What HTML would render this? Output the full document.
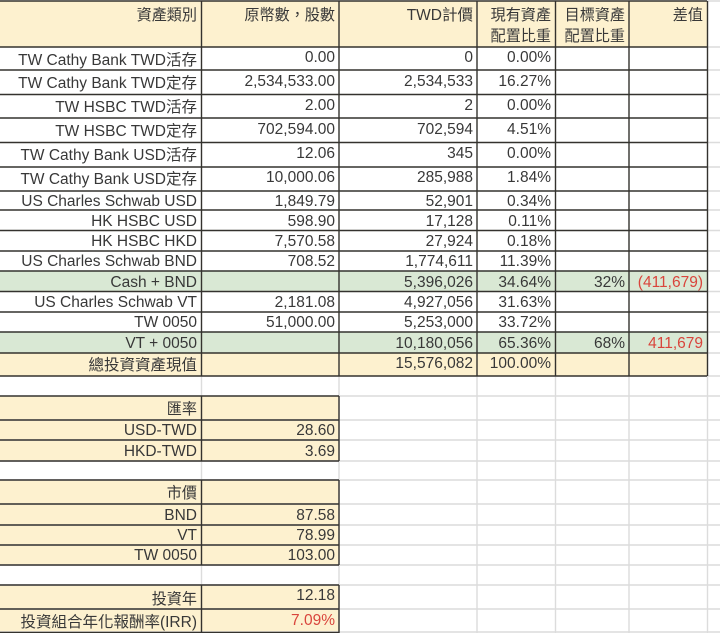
<!DOCTYPE html>
<html><head><meta charset="utf-8">
<style>
html,body{margin:0;padding:0;background:#fff;width:720px;height:633px;overflow:hidden}
svg{display:block;filter:blur(.35px)}
text{font-family:"Liberation Sans","Noto Sans CJK TC",sans-serif;font-size:15.5px;fill:#383838;text-anchor:end}
.c{font-size:15.1px}
.r{fill:#d9453c}
</style></head><body>
<svg width="720" height="633" viewBox="0 0 720 633" xmlns="http://www.w3.org/2000/svg">
<!-- fills -->
<g fill="#fdf1cf">
<rect x="0" y="1" width="707" height="46"/>
<rect x="0" y="353" width="707" height="23"/>
<rect x="0" y="396" width="339" height="65"/>
<rect x="0" y="480" width="339" height="85"/>
<rect x="0" y="585" width="339" height="48"/>
</g>
<g fill="#d9e8d4">
<rect x="0" y="271" width="707" height="21"/>
<rect x="0" y="332" width="707" height="21"/>
</g>
<!-- faint grid -->
<g stroke="#dcdcdc" stroke-width="1.4" fill="none">
<path d="M201.5 376V396M201.5 461V480M201.5 565V585"/>
<path d="M339 376V633M477 376V633M555.5 376V633M629 376V633M707.5 376V633"/>
<path d="M0 420H720M0 440H720M0 461H720M0 480H720M0 504H720M0 525H720M0 545H720M0 565H720M0 585H720M0 609H720M0 632H720"/>
<path d="M339 396H720"/>
<path d="M707 1H720M707 47H720M707 70H720M707 94.500H720M707 118H720M707 142.500H720M707 167H720M707 191H720M707 210H720M707 230.500H720M707 251H720M707 271H720M707 291.500H720M707 312H720M707 332H720M707 353H720M707 376H720"/>
</g>
<!-- dark grid -->
<g stroke="#34322e" stroke-width="1.4" fill="none">
<path d="M0 1H707M0 47H707M0 70H707M0 94.500H707M0 118H707M0 142.500H707M0 167H707M0 191H707M0 210H707M0 230.500H707M0 251H707M0 271H707M0 291.500H707M0 312H707M0 332H707M0 353H707M0 376H707"/>
<path d="M201.500 1V376M339 1V376M477 1V376M555.500 1V376M629 1V376M707.500 1V376"/>
<path d="M0 396H339M0 420H339M0 440H339M0 461H339M0 480H339M0 504H339M0 525H339M0 545H339M0 565H339M0 585H339M0 609H339M0 632.500H339"/>
<path d="M201.500 396V461M339 396V461M201.500 480V565M339 480V565M201.500 585V633M339 585V633"/>
</g>
<!-- header -->
<text class="c" x="197" y="20">資產類別</text>
<text class="c" x="335" y="20">原幣數，股數</text>
<text x="473" y="20">TWD計價</text>
<text class="c" x="551" y="20">現有資產</text>
<text class="c" x="551" y="41">配置比重</text>
<text class="c" x="625" y="20">目標資產</text>
<text class="c" x="625" y="41">配置比重</text>
<text class="c" x="703" y="20">差值</text>
<!-- col 1 -->
<text x="197" y="65">TW Cathy Bank TWD活存</text>
<text x="197" y="88">TW Cathy Bank TWD定存</text>
<text x="197" y="112">TW HSBC TWD活存</text>
<text x="197" y="136">TW HSBC TWD定存</text>
<text x="197" y="160">TW Cathy Bank USD活存</text>
<text x="197" y="184">TW Cathy Bank USD定存</text>
<text x="197" y="206">US Charles Schwab USD</text>
<text x="197" y="226">HK HSBC USD</text>
<text x="197" y="246">HK HSBC HKD</text>
<text x="197" y="266">US Charles Schwab BND</text>
<text x="197" y="287">Cash + BND</text>
<text x="197" y="307">US Charles Schwab VT</text>
<text x="197" y="327">TW 0050</text>
<text x="197" y="348">VT + 0050</text>
<text x="197" y="370">總投資資產現值</text>
<!-- col 2 -->
<text x="335" y="62">0.00</text>
<text x="335" y="86">2,534,533.00</text>
<text x="335" y="110">2.00</text>
<text x="335" y="134">702,594.00</text>
<text x="335" y="158">12.06</text>
<text x="335" y="182">10,000.06</text>
<text x="335" y="206">1,849.79</text>
<text x="335" y="226">598.90</text>
<text x="335" y="246">7,570.58</text>
<text x="335" y="266">708.52</text>
<text x="335" y="307">2,181.08</text>
<text x="335" y="327">51,000.00</text>
<!-- col 3 -->
<text x="473" y="62">0</text>
<text x="473" y="86">2,534,533</text>
<text x="473" y="110">2</text>
<text x="473" y="134">702,594</text>
<text x="473" y="158">345</text>
<text x="473" y="182">285,988</text>
<text x="473" y="206">52,901</text>
<text x="473" y="226">17,128</text>
<text x="473" y="246">27,924</text>
<text x="473" y="266">1,774,611</text>
<text x="473" y="287">5,396,026</text>
<text x="473" y="307">4,927,056</text>
<text x="473" y="327">5,253,000</text>
<text x="473" y="348">10,180,056</text>
<text x="473" y="368">15,576,082</text>
<!-- col 4 -->
<text x="551" y="62">0.00%</text>
<text x="551" y="86">16.27%</text>
<text x="551" y="110">0.00%</text>
<text x="551" y="134">4.51%</text>
<text x="551" y="158">0.00%</text>
<text x="551" y="182">1.84%</text>
<text x="551" y="206">0.34%</text>
<text x="551" y="226">0.11%</text>
<text x="551" y="246">0.18%</text>
<text x="551" y="266">11.39%</text>
<text x="551" y="287">34.64%</text>
<text x="551" y="307">31.63%</text>
<text x="551" y="327">33.72%</text>
<text x="551" y="348">65.36%</text>
<text x="551" y="368">100.00%</text>
<!-- col 5, 6 -->
<text x="625" y="287">32%</text>
<text x="625" y="348">68%</text>
<text x="703" y="287" class="r">(411,679)</text>
<text x="703" y="348" class="r">411,679</text>
<!-- lower tables -->
<text class="c" x="197" y="414">匯率</text>
<text x="197" y="435">USD-TWD</text>
<text x="335" y="435">28.60</text>
<text x="197" y="456">HKD-TWD</text>
<text x="335" y="456">3.69</text>
<text class="c" x="197" y="498">市價</text>
<text x="197" y="520">BND</text>
<text x="335" y="520">87.58</text>
<text x="197" y="540">VT</text>
<text x="335" y="540">78.99</text>
<text x="197" y="560">TW 0050</text>
<text x="335" y="560">103.00</text>
<text class="c" x="197" y="604">投資年</text>
<text x="335" y="600">12.18</text>
<text x="197" y="627">投資組合年化報酬率(IRR)</text>
<text x="335" y="625" class="r">7.09%</text>
</svg>
</body></html>
